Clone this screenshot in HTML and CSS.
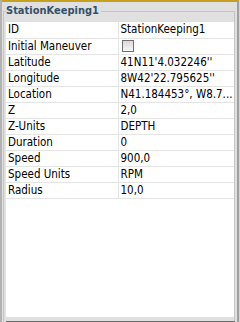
FILE: index.html
```html
<!DOCTYPE html>
<html lang="en">
  <head>
    <meta charset="UTF-8" />
    <title>StationKeeping1</title>
    <link rel="stylesheet" href="styles.css">
  </head>
  <body>
    <div class="window">
      <div class="frame">
        <fieldset class="group">
          <legend>StationKeeping1</legend>
          <div class="grid">
            <table class="props">
              <tr><td class="key">ID</td><td class="val">StationKeeping1</td></tr>
              <tr><td class="key">Initial Maneuver</td><td class="val"><span class="check"></span></td></tr>
              <tr><td class="key">Latitude</td><td class="val">41N11'4.032246''</td></tr>
              <tr><td class="key">Longitude</td><td class="val">8W42'22.795625''</td></tr>
              <tr><td class="key">Location</td><td class="val">N41.184453°, W8.7...</td></tr>
              <tr><td class="key">Z</td><td class="val">2,0</td></tr>
              <tr><td class="key">Z-Units</td><td class="val">DEPTH</td></tr>
              <tr><td class="key">Duration</td><td class="val">0</td></tr>
              <tr><td class="key">Speed</td><td class="val">900,0</td></tr>
              <tr><td class="key">Speed Units</td><td class="val">RPM</td></tr>
              <tr><td class="key">Radius</td><td class="val">10,0</td></tr>
            </table>
          </div>
          <div class="bottom-line"></div>
        </fieldset>
      </div>
    </div>
  </body>
</html>
```

FILE: styles.css
```css
* {
  box-sizing: border-box;
}

html,
body {
  margin: 0;
  padding: 0;
}

body {
  width: 240px;
  height: 322px;
  overflow: hidden;
  background: #e0e0e0;
  font-family: "DejaVu Sans Condensed", "DejaVu Sans", sans-serif;
  font-size: 11.5px;
  color: #000;
}

.window {
  height: 322px;
  border-left: 2px solid #b2b2b2;
  border-right: 1px solid #d6d6d6;
}

.frame {
  height: 322px;
  border-top: 2px solid #c8a020;
  border-right: 2px solid #a0a0a0;
}

.group {
  margin: 0 2px 0 1px;
  padding: 2px 0 0 2px;
  border: 1px solid #c4c4c4;
  border-bottom: none;
  min-width: 0;
  height: 320px;
}

.group legend {
  padding: 0 2px 0 0;
  height: 18px;
  line-height: 17px;
  font-size: 11px;
  font-weight: bold;
  color: #35506b;
}

.grid {
  height: 295px;
  background: #fff;
}

.props {
  width: 100%;
  border-collapse: collapse;
  table-layout: fixed;
}

.props td {
  height: 16px;
  padding: 0;
  line-height: 15px;
  border-bottom: 1px solid #e4e4e4;
  white-space: nowrap;
  overflow: hidden;
  vertical-align: middle;
}

.props .key {
  width: 112px;
  padding-left: 2px;
  border-right: 1px solid #e4e4e4;
}

.props .val {
  padding-left: 2px;
}

.check {
  display: block;
  width: 12px;
  height: 12px;
  margin-left: 1px;
  border: 1px solid #707070;
  background: linear-gradient(#dadada, #f6f6f6);
}

.bottom-line {
  height: 1px;
  margin-top: 4px;
  margin-right: -1px;
  background: #6a6a6a;
}
```
